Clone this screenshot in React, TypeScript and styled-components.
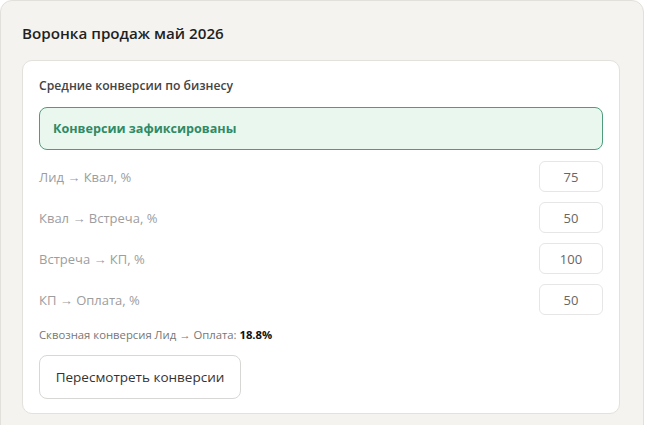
import React from 'react'
import styled, { createGlobalStyle } from 'styled-components'

const GlobalStyle = createGlobalStyle`
  html, body {
    margin: 0;
    padding: 0;
    background: #ffffff;
    font-family: "Open Sans", "Noto Sans", sans-serif;
  }
`

const Panel = styled.div`
  width: 644px;
  height: 440px;
  box-sizing: border-box;
  background: #f4f3ef;
  border: 1px solid #e2e0da;
  border-radius: 12px;
  padding: 22px 23px 0 21px;
`

const Title = styled.div`
  font-size: 15.2px;
  font-weight: 600;
  color: #1f1f1f;
  line-height: 20px;
  margin-bottom: 17px;
`

const Card = styled.div`
  background: #ffffff;
  border: 1px solid #e3e1db;
  border-radius: 10px;
  padding: 15px 16px 14px 16px;
`

const Subtitle = styled.div`
  font-size: 12.2px;
  font-weight: 600;
  color: #444444;
  line-height: 20px;
  margin-bottom: 11px;
`

const Notice = styled.div`
  height: 43px;
  box-sizing: border-box;
  display: flex;
  align-items: center;
  padding: 0 13px;
  background: #e9f7ef;
  border: 1px solid #4f9c7c;
  border-radius: 8px;
  font-size: 12.6px;
  font-weight: 700;
  color: #2f8a65;
  margin-bottom: 11px;
`

const Rows = styled.div`
  display: flex;
  flex-direction: column;
  gap: 10px;
`

const Row = styled.div`
  display: flex;
  align-items: center;
  justify-content: space-between;
`

const Label = styled.div`
  font-size: 13px;
  color: #9d9d9d;
`

const ValueBox = styled.div`
  width: 64px;
  height: 31px;
  box-sizing: border-box;
  border: 1px solid #e6e6e6;
  border-radius: 6px;
  display: flex;
  align-items: center;
  justify-content: center;
  font-size: 13px;
  color: #666666;
`

const Summary = styled.div`
  margin-top: 12px;
  font-size: 11.3px;
  color: #777777;
  line-height: 16px;

  b {
    color: #111111;
    font-weight: 700;
  }
`

const ActionButton = styled.button`
  margin-top: 12px;
  height: 44px;
  width: 202px;
  box-sizing: border-box;
  background: #ffffff;
  border: 1px solid #d7d7d5;
  border-radius: 8px;
  font-family: inherit;
  font-size: 13.5px;
  color: #333333;
  cursor: pointer;
`

const ROWS = [
  { label: 'Лид → Квал, %', value: '75' },
  { label: 'Квал → Встреча, %', value: '50' },
  { label: 'Встреча → КП, %', value: '100' },
  { label: 'КП → Оплата, %', value: '50' }
]

const App: React.FC = () => {
  return (
    <>
      <GlobalStyle />
      <Panel>
        <Title>Воронка продаж май 2026</Title>
        <Card>
          <Subtitle>Средние конверсии по бизнесу</Subtitle>
          <Notice>Конверсии зафиксированы</Notice>
          <Rows>
            {ROWS.map(({ label, value }) => (
              <Row key={label}>
                <Label>{label}</Label>
                <ValueBox>{value}</ValueBox>
              </Row>
            ))}
          </Rows>
          <Summary>
            Сквозная конверсия Лид → Оплата: <b>18.8%</b>
          </Summary>
          <ActionButton>Пересмотреть конверсии</ActionButton>
        </Card>
      </Panel>
    </>
  )
}

export default App
